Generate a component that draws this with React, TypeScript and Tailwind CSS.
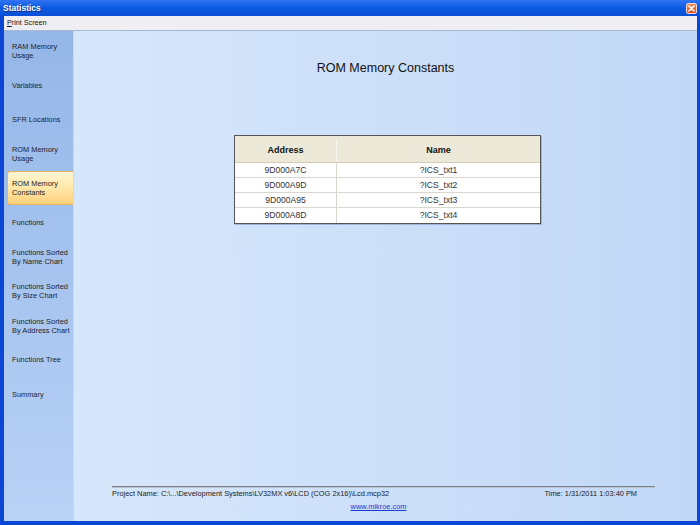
const sideItems = [
  ['RAM Memory', 'Usage'],
  ['Variables'],
  ['SFR Locations'],
  ['ROM Memory', 'Usage'],
  ['ROM Memory', 'Constants'],
  ['Functions'],
  ['Functions Sorted', 'By Name Chart'],
  ['Functions Sorted', 'By Size Chart'],
  ['Functions Sorted', 'By Address Chart'],
  ['Functions Tree'],
  ['Summary'],
];

const rows = [
  ['9D000A7C', '?ICS_txt1'],
  ['9D000A9D', '?ICS_txt2'],
  ['9D000A95', '?ICS_txt3'],
  ['9D000A8D', '?ICS_txt4'],
];

const SELECTED = 4;

function CloseButton() {
  return (
    <span className="flex h-[11px] w-[11px] items-center justify-center rounded-[2px] border border-[#f4d8c8] bg-gradient-to-b from-[#f08a5c] to-[#d8481c]">
      <svg width="7" height="7" viewBox="0 0 7 7">
        <path d="M1 1 L6 6 M6 1 L1 6" stroke="white" strokeWidth="1.6" strokeLinecap="round" />
      </svg>
    </span>
  );
}

export default function App() {
  return (
    <div className="flex h-[525px] w-[700px] flex-col overflow-hidden bg-[#0b47d4] font-['Liberation_Sans',Arial,sans-serif] text-[#222]">
      {/* Title bar */}
      <div className="flex h-[16px] shrink-0 items-center justify-between bg-gradient-to-b from-[#2f74f2] via-[#0b5ae2] to-[#0a4fd6] pl-[3px] pr-[3px]">
        <span className="text-[8.5px] font-bold leading-none text-white [text-shadow:1px_1px_0_#0a2f8c]">Statistics</span>
        <CloseButton />
      </div>

      {/* Frame body */}
      <div className="flex min-h-0 flex-1 flex-col border-l-[4px] border-r-[3px] border-b-[4px] border-[#0b47d4]">
        {/* Menu bar */}
        <div className="flex h-[15px] shrink-0 items-center border-b border-[#a8b8d0] bg-[#eeeef3] pl-[3px]">
          <span className="text-[7.2px] leading-none text-[#111]">
            <span className="underline">P</span>rint Screen
          </span>
        </div>

        <div className="flex min-h-0 flex-1">
          {/* Sidebar */}
          <div className="flex w-[70px] shrink-0 flex-col border-r border-[#c6daf6] bg-gradient-to-b from-[#94b6e8] to-[#b9d2f6] pt-[3px]">
            {sideItems.map((lines, i) => (
              <div
                key={i}
                className={
                  i === SELECTED
                    ? 'ml-[3px] flex h-[34.3px] flex-col justify-center rounded-l-[3px] border border-r-0 border-[#e2b25c] bg-gradient-to-b from-[#fff6d2] via-[#ffe7a8] to-[#fdd07a] pl-[4px]'
                    : 'flex h-[34.3px] flex-col justify-center pl-[8px]'
                }
              >
                {lines.map((l) => (
                  <span key={l} className="whitespace-nowrap text-[7.4px] leading-[9px] text-[#1e1e1e]">
                    {l}
                  </span>
                ))}
              </div>
            ))}
          </div>

          {/* Content */}
          <div className="flex min-w-0 flex-1 flex-col bg-gradient-to-r from-[#d7e7fb] to-[#c2d8f7]">
            <div className="pt-[30px] text-center text-[12.5px] leading-[14px] text-[#111]">
              ROM Memory Constants
            </div>

            <div className="ml-[160px] mt-[60px] w-[307px] border border-[#555] bg-white shadow-[1px_1px_0_#9fb4d8]">
              <div className="flex h-[27px] border-b border-[#d0ccb8] bg-[#ece9d8] pt-[3px] text-[9px] font-bold text-[#111]">
                <div className="flex w-[102px] items-center justify-center border-r border-[#f8f6ee]">Address</div>
                <div className="flex flex-1 items-center justify-center">Name</div>
              </div>
              {rows.map(([a, n], i) => (
                <div
                  key={a}
                  className={`flex h-[15px] text-[8.6px] text-[#333] ${i < rows.length - 1 ? 'border-b border-[#d8d8d0]' : ''}`}
                >
                  <div className="flex w-[102px] items-center justify-center border-r border-[#d8d8d0]">{a}</div>
                  <div className="flex flex-1 items-center justify-center">{n}</div>
                </div>
              ))}
            </div>

            {/* Footer */}
            <div className="mt-auto ml-[38px] mr-[42px] pb-[10px]">
              <div className="h-[2px] border-t border-b border-t-[#7c8088] border-b-[#b8c4d6]" />
              <div className="flex items-center justify-between pr-[18px] pt-[1px] text-[7.4px] leading-[9px] text-[#1a1a1a]">
                <span>Project Name: C:\...\Development Systems\LV32MX v6\LCD (COG 2x16)\Lcd.mcp32</span>
                <span>Time: 1/31/2011 1:03:40 PM</span>
              </div>
              <div className="mt-[4px] pr-[10px] text-center text-[7.4px] leading-[9px]">
                <span className="text-[#1a3ccc] underline">www.mikroe.com</span>
              </div>
            </div>
          </div>
        </div>
      </div>
    </div>
  );
}
